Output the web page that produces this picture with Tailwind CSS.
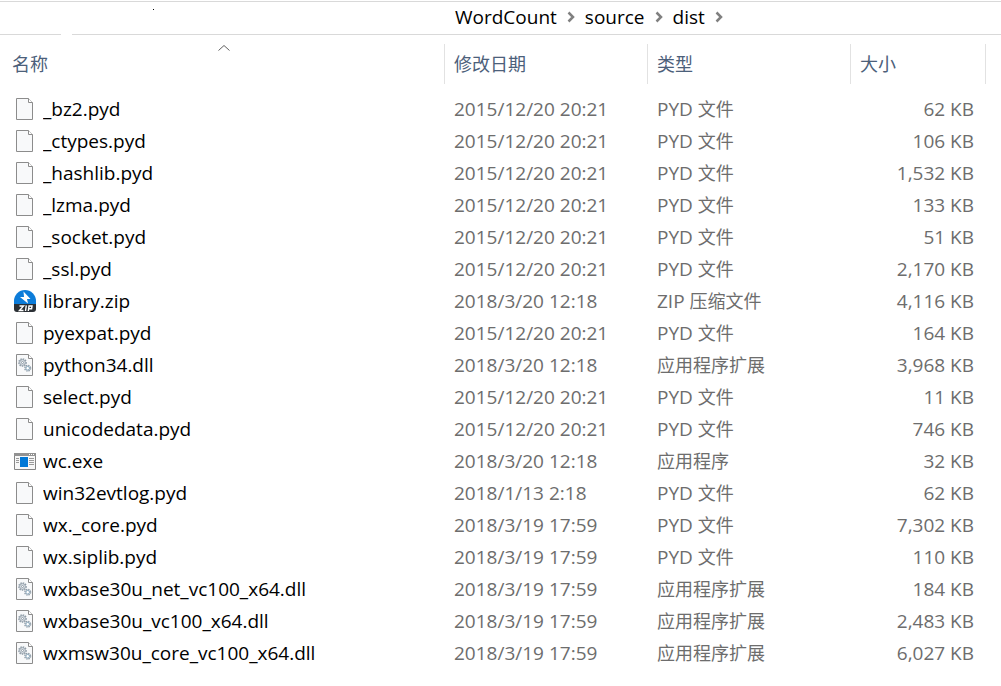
<!doctype html>
<html lang="zh-CN">
  <head>
    <meta charset="UTF-8" />
    <meta name="viewport" content="width=device-width, initial-scale=1.0" />
    <title>dist</title>
    <script src="https://cdn.jsdelivr.net/npm/@tailwindcss/browser@4"></script>
  </head>

  <body class="min-h-screen bg-white font-['Open_Sans','Noto_Sans_CJK_SC',sans-serif] text-[19px] leading-8 text-black">
    <!-- ICONS -->
    <svg class="hidden">
      <symbol id="page" viewBox="0 0 24 24">
        <path d="M3.5 1.5h12l4 4v17h-16z" fill="#f8f9fa" stroke="#8c8c8c" />
        <path d="M15.5 1.5v4h4" fill="#fff" stroke="#8c8c8c" />
      </symbol>
      <symbol id="pyd" viewBox="0 0 24 24">
        <use href="#page" />
      </symbol>
      <symbol id="dll" viewBox="0 0 24 24">
        <use href="#page" />
        <g fill="#dfe4e8" stroke="#8f9ca7">
          <circle cx="9.5" cy="9.5" r="3.600" stroke-width="1.5" stroke-dasharray="1.4 1" />
          <circle cx="9.5" cy="9.5" r="2.8" stroke-width=".8" />
          <circle cx="9.5" cy="9.5" r="1" fill="#fff" />
          <circle cx="14.7" cy="15.2" r="2.900" stroke-width="1.4" stroke-dasharray="1.3 1" />
          <circle cx="14.7" cy="15.2" r="1.800" fill="#fff" stroke="#8ba9bd" />
        </g>
      </symbol>
      <symbol id="zip" viewBox="0 0 24 24">
        <path d="M1 15V12a11 11 0 0 1 22 0v3z" fill="#0c7cd9" />
        <path d="M10.500 2.500L17.500 10H14l1 4.500L7 8h4z" fill="#fff" />
        <path d="M1 15h22v5q0 3-3 3H4q-3 0-3-3z" fill="#2b3035" />
        <path d="M6.500 17h4l-4 4.500h4M13.300 16.300l-.8 5.700M15.300 22l.7-5h3l-.4 2.700h-2.800" fill="none" stroke="#fff" stroke-width="1.400" />
      </symbol>
      <symbol id="exe" viewBox="0 0 24 24">
        <path d="M1.500 4.500h21v16h-21z" fill="#f7f7f7" stroke="#858585" />
        <path d="M1 4h22v3H1z" fill="#929292" />
        <path d="M16 5.500h1M18 5.500h1M20 5.500h1" stroke="#fff" />
        <path d="M7 8h8v10H7z" fill="#0078d7" />
        <path d="M3 9.500h3M3 11.500h3M3 13.500h3M16 9.500h5M16 11.500h5M16 13.500h5M16 15.500h5" stroke="#9a9a9a" />
      </symbol>
    </svg>

    <!-- ADDRESS BAR -->
    <header class="relative mt-px border-y border-[#d9d9d9]">
      <span class="absolute left-[153px] top-[7px] size-px bg-black"></span>
      <span class="absolute -bottom-px left-[61px] h-px w-[11px] bg-white"></span>
      <nav class="flex h-8 items-center gap-[10px] pb-0.5 pl-[455px]">
        <a href="#">WordCount</a>
        <svg class="h-3 w-2" viewBox="0 0 8 12" fill="none" stroke="#808080" stroke-width="2.500"><path d="M1.500 1.500L6 6l-4.500 4.500" /></svg>
        <a href="#">source</a>
        <svg class="h-3 w-2" viewBox="0 0 8 12" fill="none" stroke="#808080" stroke-width="2.500"><path d="M1.500 1.500L6 6l-4.500 4.500" /></svg>
        <a href="#">dist</a>
        <svg class="h-3 w-2" viewBox="0 0 8 12" fill="none" stroke="#808080" stroke-width="2.500"><path d="M1.500 1.500L6 6l-4.500 4.500" /></svg>
      </nav>
    </header>

    <!-- FILE LIST -->
    <table class="mt-[9px] w-full table-fixed text-left">
      <thead class="text-lg text-[#4c607a]">
        <tr>
          <th class="relative h-[49px] p-0 align-top font-normal">
            <svg class="absolute left-1/2 top-0 h-2 w-3 -translate-x-1" viewBox="0 0 12 8" fill="none" stroke="#606060"><path d="M.5 6.500L6 1.500l5.500 5" /></svg>
            <button type="button" class="h-10 w-full pl-3 text-left">名称</button>
          </th>
          <th class="w-[203px] p-0 align-top font-normal">
            <button type="button" class="h-10 w-full border-l border-[#e2e2e2] pl-[9px] text-left">修改日期</button>
          </th>
          <th class="w-[203px] p-0 align-top font-normal">
            <button type="button" class="h-10 w-full border-l border-[#e2e2e2] pl-[9px] text-left">类型</button>
          </th>
          <th class="w-[136px] p-0 align-top font-normal">
            <button type="button" class="h-10 w-full border-x border-[#e2e2e2] pl-[9px] text-left">大小</button>
          </th>
          <td class="w-[15px]"></td>
        </tr>
      </thead>
      <tbody id="files" class="text-[#6d6d6d]"></tbody>
    </table>

    <script>
      const types = {
        pyd: "PYD <span class='text-lg'>文件</span>",
        zip: "ZIP <span class='text-lg'>压缩文件</span>",
        dll: "<span class='text-lg'>应用程序扩展</span>",
        exe: "<span class='text-lg'>应用程序</span>",
      };

      const files = [
        ["_bz2.pyd", "2015/12/20 20:21", "62 KB"],
        ["_ctypes.pyd", "2015/12/20 20:21", "106 KB"],
        ["_hashlib.pyd", "2015/12/20 20:21", "1,532 KB"],
        ["_lzma.pyd", "2015/12/20 20:21", "133 KB"],
        ["_socket.pyd", "2015/12/20 20:21", "51 KB"],
        ["_ssl.pyd", "2015/12/20 20:21", "2,170 KB"],
        ["library.zip", "2018/3/20 12:18", "4,116 KB"],
        ["pyexpat.pyd", "2015/12/20 20:21", "164 KB"],
        ["python34.dll", "2018/3/20 12:18", "3,968 KB"],
        ["select.pyd", "2015/12/20 20:21", "11 KB"],
        ["unicodedata.pyd", "2015/12/20 20:21", "746 KB"],
        ["wc.exe", "2018/3/20 12:18", "32 KB"],
        ["win32evtlog.pyd", "2018/1/13 2:18", "62 KB"],
        ["wx._core.pyd", "2018/3/19 17:59", "7,302 KB"],
        ["wx.siplib.pyd", "2018/3/19 17:59", "110 KB"],
        ["wxbase30u_net_vc100_x64.dll", "2018/3/19 17:59", "184 KB"],
        ["wxbase30u_vc100_x64.dll", "2018/3/19 17:59", "2,483 KB"],
        ["wxmsw30u_core_vc100_x64.dll", "2018/3/19 17:59", "6,027 KB"],
      ];

      document.getElementById("files").innerHTML = files
        .map(([name, date, size]) => {
          const ext = name.split(".").pop();
          return `
            <tr class="h-8">
              <td class="p-0">
                <div class="flex h-8 items-center gap-[6px] pl-[13px] text-black">
                  <svg class="size-6 shrink-0"><use href="#${ext}" /></svg>
                  <span class="truncate">${name}</span>
                </div>
              </td>
              <td class="p-0 pl-[10px]"><div class="h-8">${date}</div></td>
              <td class="p-0 pl-[10px]"><div class="h-8">${types[ext]}</div></td>
              <td class="p-0 pr-3 text-right"><div class="h-8">${size}</div></td>
            </tr>`;
        })
        .join("");
    </script>
  </body>
</html>
